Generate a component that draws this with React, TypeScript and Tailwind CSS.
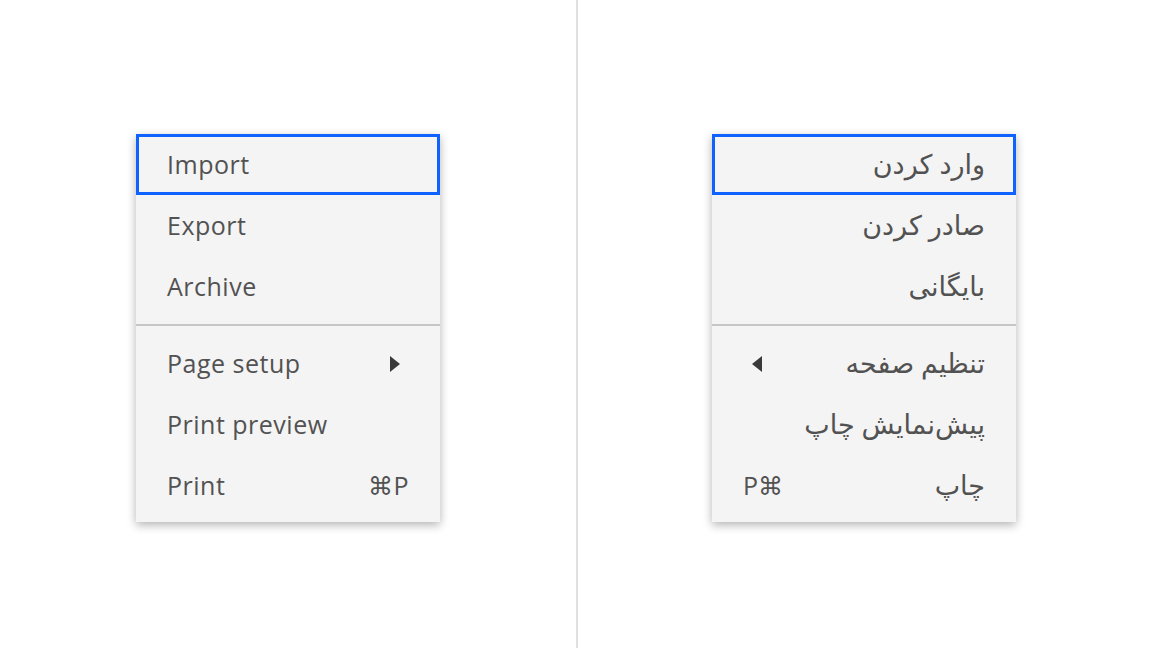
import React from 'react';

interface MenuItem {
  label: string;
  shortcut?: string;
  submenu?: boolean;
  focused?: boolean;
  dividerBefore?: boolean;
}

const ltrItems: MenuItem[] = [
  { label: 'Import', focused: true },
  { label: 'Export' },
  { label: 'Archive' },
  { label: 'Page setup', submenu: true, dividerBefore: true },
  { label: 'Print preview' },
  { label: 'Print', shortcut: '⌘P' },
];

const rtlItems: MenuItem[] = [
  { label: 'وارد کردن', focused: true },
  { label: 'صادر کردن' },
  { label: 'بایگانی' },
  { label: 'تنظیم صفحه', submenu: true, dividerBefore: true },
  { label: 'پیش‌نمایش چاپ' },
  { label: 'چاپ', shortcut: '⌘P' },
];

const Caret = ({ rtl }: { rtl: boolean }) => (
  <svg width="10" height="16" viewBox="0 0 10 16" className="mx-[9px]">
    {rtl ? <path d="M10 0 L0 8 L10 16 Z" fill="#393939" /> : <path d="M0 0 L10 8 L0 16 Z" fill="#393939" />}
  </svg>
);

const Menu = ({ items, rtl }: { items: MenuItem[]; rtl: boolean }) => (
  <div
    dir={rtl ? 'rtl' : 'ltr'}
    className="w-[304px] self-start bg-[#f4f4f4] pb-[6px] shadow-[0_3px_9px_rgba(0,0,0,0.3)]"
  >
    {items.map((item) => (
      <React.Fragment key={item.label}>
        {item.dividerBefore && <div className="mt-[7px] mb-[7px] h-[2px] bg-[#c6c6c6]" />}
        <div
          className={`flex h-[61px] items-center justify-between pl-[31px] pr-[31px] text-[#525252] ${
            rtl ? 'text-[27px]' : 'text-[25px] tracking-[0.5px]'
          } ${item.focused ? 'ring-[3px] ring-inset ring-[#0f62fe]' : ''}`}
        >
          <span>{item.label}</span>
          {item.submenu && <Caret rtl={rtl} />}
          {item.shortcut && <span className="text-[25px]">{item.shortcut}</span>}
        </div>
      </React.Fragment>
    ))}
  </div>
);

export default function App() {
  return (
    <div
      className="flex h-[648px] w-[1152px] items-start bg-white"
      style={{ fontFamily: '"Open Sans", "DejaVu Sans", sans-serif' }}
    >
      <div className="flex h-full w-[576px] justify-center pt-[134px]">
        <Menu items={ltrItems} rtl={false} />
      </div>
      <div className="flex h-full w-[576px] justify-center border-l-2 border-[#e0e0e0] pr-[2px] pt-[134px]">
        <Menu items={rtlItems} rtl={true} />
      </div>
    </div>
  );
}
